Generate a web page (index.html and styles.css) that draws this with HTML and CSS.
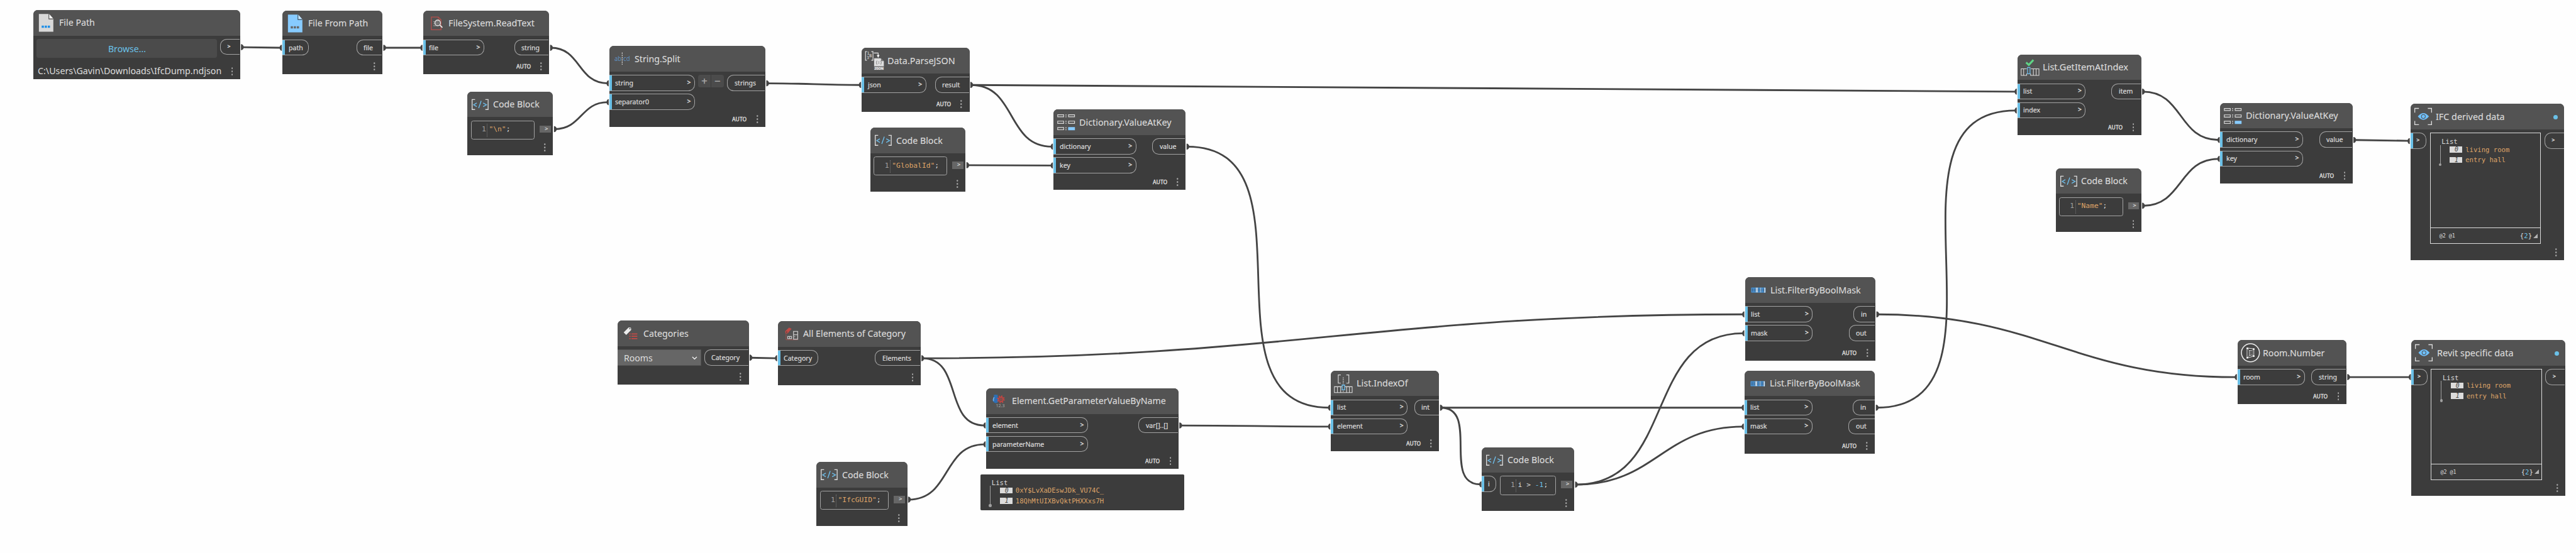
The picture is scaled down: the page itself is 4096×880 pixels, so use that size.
FILE: index.html
```html
<!DOCTYPE html>
<html lang="en">
<head>
<meta charset="utf-8">
<title>Graph</title>
<link rel="stylesheet" href="styles.css">
</head>
<body>
<svg class="defs" aria-hidden="true">
  <symbol id="i-code" viewBox="0 0 46 46"><path d="M14 14H8.700V32H14M32.500 14H37.500V32H32.500" fill="none" stroke="#dcdcdc" stroke-width="1.500"/><path d="M17 20.300L11.500 23.500L17 26.700M28.500 20.300L34.500 23.500L28.500 26.700M25 16.500L20.500 29.500" fill="none" stroke="#6fc0ee" stroke-width="1.500"/></symbol>
  <symbol id="i-dict" viewBox="0 0 46 46"><path d="M7.700 9.700H18.500V13.500H7.700zM27.200 9.700H38V13.500H27.200zM7.700 21.200H18.500V25.300H7.700zM27.200 21.200H38V25.300H27.200zM7.700 32.700H18.500V36.800H7.700z" fill="none" stroke="#dcdcdc" stroke-width="1.300"/><path d="M26.500 32H38.700V37.500H26.500z" fill="#87cbff"/><path d="M22.600 9V14.500M22.600 20.500V26M22.600 32V37.500" stroke="#dcdcdc" stroke-width="1.400" stroke-dasharray="2.200 1.300"/></symbol>
  <symbol id="i-filter" viewBox="0 0 46 46"><path d="M11 19h25.500v8.500H11z" fill="#3f6f9d"/><path d="M11.500 19.500h24.500v7.500h-24.500zM15.500 19v8.500M25 19v8.500M31 19v8.500" fill="none" stroke="#4a9ae0" stroke-width="1.200"/><path d="M19.500 19v8.500M28 19v8.500" stroke="#b9d9f2" stroke-width="1.200"/><path d="M35.300 19v9M21.500 19v8.500" stroke="#f2f6fa" stroke-width="1.600"/></symbol>
  <symbol id="i-eye" viewBox="0 0 46 46"><path d="M7.500 16V8.500H15M31 8.500H37.700V16M7.500 31V37.700H15M31 37.700H37.700V31" fill="none" stroke="#dcdcdc" stroke-width="1.500"/><path d="M13 23Q23 11 33 23Q23 35 13 23z" fill="#6fc0fc"/><circle cx="23" cy="23" r="3.500" fill="none" stroke="#535353" stroke-width="1.200"/></symbol>
  <symbol id="i-dots" viewBox="0 0 3 15"><circle cx="1.500" cy="1.800" r="1.500" fill="#a6a6a6"/><circle cx="1.500" cy="7.500" r="1.500" fill="#a6a6a6"/><circle cx="1.500" cy="13.200" r="1.500" fill="#a6a6a6"/></symbol>
</svg>
<main class="canvas">
<svg class="wires" viewBox="0 0 4634 995">
  <g fill="none" stroke="#444" stroke-width="3.200">
    <path d="M434 85L505 86"/>
    <path d="M690 86H758"/>
    <path d="M991 86C1045 86 1039 150 1093 150"/>
    <path d="M998 232.500C1046 232.500 1045 184 1093 184"/>
    <path d="M1380 150C1455 150 1472 153 1547 153"/>
    <path d="M1747 153C2593 153 2780 165 3626 165"/>
    <path d="M1747 153C1829 153 1810 264 1892 264"/>
    <path d="M1740 297.500L1892 298"/>
    <path d="M2136 264C2377 264 2150 734 2391 734"/>
    <path d="M1350 644L1396 645"/>
    <path d="M1659 645C2325 645 2470 566 3136 566"/>
    <path d="M1659 645C1733 645 1697 766 1771 766"/>
    <path d="M1635 899.500C1711 899.500 1695 800 1771 800"/>
    <path d="M2123 766C2244 766 2270 768 2391 768"/>
    <path d="M2592 734H3135"/>
    <path d="M2592 734C2662 734 2593 872 2663 872"/>
    <path d="M2835 872.500C3018 872.500 2953 600 3136 600"/>
    <path d="M2835 872.500C2978 872.500 2992 768 3135 768"/>
    <path d="M3377 566C3672 566 3727 679 4022 679"/>
    <path d="M3376 734C3642 734 3360 199 3626 199"/>
    <path d="M3855 165C3928 165 3918 252 3991 252"/>
    <path d="M3855 370.500C3927 370.500 3919 286 3991 286"/>
    <path d="M4235 252L4333 253.500"/>
    <path d="M4224 679H4335"/>
  </g>
  <g fill="#444">
    <path d="M433.500 79.500a5 5.500 0 0 1 0 11zM689.500 80.500a5 5.500 0 0 1 0 11zM989.500 80.500a5 5.500 0 0 1 0 11zM996.500 227a5 5.500 0 0 1 0 11zM1378.500 144.500a5 5.500 0 0 1 0 11zM1745.500 147.500a5 5.500 0 0 1 0 11zM1738.500 292a5 5.500 0 0 1 0 11zM2134.500 258.500a5 5.500 0 0 1 0 11zM1348.500 638.500a5 5.500 0 0 1 0 11zM1657.500 639.500a5 5.500 0 0 1 0 11zM1633.500 894a5 5.500 0 0 1 0 11zM2121.500 760.500a5 5.500 0 0 1 0 11zM2590.500 728.500a5 5.500 0 0 1 0 11zM2833.500 867a5 5.500 0 0 1 0 11zM3375.500 560.500a5 5.500 0 0 1 0 11zM3374.500 728.500a5 5.500 0 0 1 0 11zM3853.500 159.500a5 5.500 0 0 1 0 11zM3853.500 365a5 5.500 0 0 1 0 11zM4233.500 246.500a5 5.500 0 0 1 0 11zM4222.500 673.500a5 5.500 0 0 1 0 11z"/>
    <path d="M507 80.500a4 5.500 0 0 0 0 11zM760 80.500a4 5.500 0 0 0 0 11zM1095 144.500a4 5.500 0 0 0 0 11zM1095 178.500a4 5.500 0 0 0 0 11zM1549 147.500a4 5.500 0 0 0 0 11zM1894 258.500a4 5.500 0 0 0 0 11zM1894 292.500a4 5.500 0 0 0 0 11zM1398 639.500a4 5.500 0 0 0 0 11zM1773 760.500a4 5.500 0 0 0 0 11zM1773 794.500a4 5.500 0 0 0 0 11zM2393 728.500a4 5.500 0 0 0 0 11zM2393 762.500a4 5.500 0 0 0 0 11zM2665 866.500a4 5.500 0 0 0 0 11zM3138 560.500a4 5.500 0 0 0 0 11zM3138 594.500a4 5.500 0 0 0 0 11zM3137 728.500a4 5.500 0 0 0 0 11zM3137 762.500a4 5.500 0 0 0 0 11zM3628 159.500a4 5.500 0 0 0 0 11zM3628 193.500a4 5.500 0 0 0 0 11zM3993 246.500a4 5.500 0 0 0 0 11zM3993 280.500a4 5.500 0 0 0 0 11zM4335 248.500a4 5.500 0 0 0 0 11zM4024 673.500a4 5.500 0 0 0 0 11zM4337 673.500a4 5.500 0 0 0 0 11z"/>
  </g>
</svg>

<article class="node file-path">
  <header><svg class="icon" viewBox="0 0 46 46"><path d="M10 7H28L36 16V39H10z" fill="#d8d8d8"/><path d="M28.500 7V15.500H36z" fill="#f6f6f6"/><path d="M28 7V16H36" fill="none" stroke="#4a4a4a" stroke-width="1.200"/><path d="M15 28h4v4h-4zM20.500 28h4v4h-4zM26 28h4v4h-4z" fill="#1e8fe8"/></svg><h2>File Path</h2></header>
  <div class="ports"><button class="browse"><span>Browse...</span></button><div class="outs"><div class="out bare"><b>&gt;</b></div></div></div>
  <footer><span class="path">C:\Users\Gavin\Downloads\IfcDump.ndjson</span><svg class="dots"><use href="#i-dots"/></svg></footer>
</article>

<article class="node file-from">
  <header><svg class="icon" viewBox="0 0 46 46"><path d="M10 7H28L36 16V39H10z" fill="#87cbff"/><path d="M28.500 7V15.500H36z" fill="#c4e4ff"/><path d="M28 7V16H36" fill="none" stroke="#3d4d5a" stroke-width="1.200"/><path d="M15 28h4v4h-4zM20.500 28h4v4h-4zM26 28h4v4h-4z" fill="#666"/></svg><h2>File From Path</h2></header>
  <div class="ports"><div class="ins"><div class="in"><span>path</span></div></div><div class="outs"><div class="out"><span>file</span></div></div></div>
  <footer><svg class="dots"><use href="#i-dots"/></svg></footer>
</article>

<article class="node read-text">
  <header><svg class="icon" viewBox="0 0 46 46"><path d="M14.500 11.500H27L32 16.500V34.500H14.500z" fill="none" stroke="#b5504c" stroke-width="1.400"/><path d="M27 11.500V16.500H32" fill="none" stroke="#b5504c"/><path d="M18 20H28M18 23.500H28M18 27H28" stroke="#999" stroke-width="1.300"/><circle cx="26" cy="22" r="5" fill="#777" fill-opacity=".7" stroke="#e8e8e8" stroke-width="1.500"/><path d="M29.500 25.500L34.500 30.500" stroke="#e8e8e8" stroke-width="2"/></svg><h2>FileSystem.ReadText</h2></header>
  <div class="ports"><div class="ins"><div class="in"><span>file</span><b>&gt;</b></div></div><div class="outs"><div class="out"><span>string</span></div></div></div>
  <footer><span class="auto">AUTO</span><svg class="dots"><use href="#i-dots"/></svg></footer>
</article>

<article class="node code newline">
  <header><svg class="icon"><use href="#i-code"/></svg><h2>Code Block</h2></header>
  <div class="ports"><div class="editor"><i>1</i><code><em>"\n"</em>;</code></div><div class="chip">&gt;</div></div>
  <footer><svg class="dots"><use href="#i-dots"/></svg></footer>
</article>

<article class="node split">
  <header><svg class="icon" viewBox="0 0 46 46"><path d="M23 12V34" stroke="#dcdcdc" stroke-width="1.300" stroke-dasharray="2.500 1.500"/><text class="ab" x="9" y="27.300" textLength="12.500" lengthAdjust="spacingAndGlyphs">ab</text><text class="ab" x="25" y="27.300" textLength="12" lengthAdjust="spacingAndGlyphs">cd</text></svg><h2>String.Split</h2></header>
  <div class="ports"><div class="ins"><div class="in"><span>string</span><b>&gt;</b></div><div class="in"><span>separator0</span><b>&gt;</b></div></div><div class="stepper"><span>+</span><span>−</span></div><div class="outs"><div class="out"><span>strings</span></div></div></div>
  <footer><span class="auto">AUTO</span><svg class="dots"><use href="#i-dots"/></svg></footer>
</article>

<article class="node parse">
  <header><svg class="icon" viewBox="0 0 46 46"><path d="M9.500 7H7V22.500H9.500M17.500 7H20.500V22.500H17.500M22 9.500H29.800V14" fill="none" stroke="#e4e4e4" stroke-width="1.300"/><path d="M27.300 13H32.300L29.800 18z" fill="#fff"/><g class="tiny"><text x="9.500" y="13">1</text><text x="9" y="20.500">3</text><text x="14" y="17">B</text></g><path d="M22.500 19H34L40 24V33.500H22.500z" fill="#dedede"/><path d="M35 19V24H40z" fill="#777"/><path d="M28 23.500Q26.500 23.500 27 26Q27 26.500 26 26.500Q27 27 27 28Q26.500 30 28 30M34 23.500Q35.500 23.500 35 26Q35 26.500 36 26.500Q35 27 35 28Q35.500 30 34 30" fill="none" stroke="#777"/><path d="M30 25.500h2M30 28h2" stroke="#777"/><path d="M22.500 33.500H40V40H22.500z" fill="#8a8a8a"/><text class="json" x="23" y="39.500" textLength="16.500" lengthAdjust="spacingAndGlyphs">JSON</text></svg><h2>Data.ParseJSON</h2></header>
  <div class="ports"><div class="ins"><div class="in"><span>json</span><b>&gt;</b></div></div><div class="outs"><div class="out"><span>result</span></div></div></div>
  <footer><span class="auto">AUTO</span><svg class="dots"><use href="#i-dots"/></svg></footer>
</article>

<article class="node code global-id">
  <header><svg class="icon"><use href="#i-code"/></svg><h2>Code Block</h2></header>
  <div class="ports"><div class="editor"><i>1</i><code><em>"GlobalId"</em>;</code></div><div class="chip">&gt;</div></div>
  <footer><svg class="dots"><use href="#i-dots"/></svg></footer>
</article>

<article class="node dict dict-a">
  <header><svg class="icon"><use href="#i-dict"/></svg><h2>Dictionary.ValueAtKey</h2></header>
  <div class="ports"><div class="ins"><div class="in"><span>dictionary</span><b>&gt;</b></div><div class="in"><span>key</span><b>&gt;</b></div></div><div class="outs"><div class="out"><span>value</span></div></div></div>
  <footer><span class="auto">AUTO</span><svg class="dots"><use href="#i-dots"/></svg></footer>
</article>

<article class="node categories">
  <header><svg class="icon" viewBox="0 0 46 46"><path d="M11 21.500L20 12.500L24 13L24.500 17L15.500 26z" fill="#ececec"/><circle cx="22" cy="14.800" r="1.100" fill="#535353"/><path d="M21 24.200h2.500M21 28.500h2.500M21 32.800h2.500M25 24.200h10.500M25 28.500h10.500M25 32.800h10.500" stroke="#c24a46" stroke-width="2"/></svg><h2>Categories</h2></header>
  <div class="ports"><div class="select"><span>Rooms</span><svg viewBox="0 0 10 6"><path d="M1 1L5 5L9 1" fill="none" stroke="#fff" stroke-width="1.500"/></svg></div><div class="outs"><div class="out"><span>Category</span></div></div></div>
  <footer><svg class="dots"><use href="#i-dots"/></svg></footer>
</article>

<article class="node all-elements">
  <header><svg class="icon" viewBox="0 0 46 46"><path d="M13 18L20 11.500L24.500 14L17.500 22L13.500 22z" fill="#c24a46"/><circle cx="15.700" cy="19.800" r="1" fill="#444"/><path d="M14.500 22V33.500H36" fill="none" stroke="#b5504c" stroke-width="1.300" stroke-dasharray="1.500 1"/><path d="M17.500 27.500h7v4h-7zM21 27.500v4" fill="none" stroke="#c8c8c8" stroke-width="1.400"/><path d="M28 18.500h7.500v14H28zM28 24.500h7.500" fill="none" stroke="#c0c0c0" stroke-width="1.600"/><path d="M29.500 28h1.500" stroke="#ddd"/></svg><h2>All Elements of Category</h2></header>
  <div class="ports"><div class="ins"><div class="in"><span>Category</span></div></div><div class="outs"><div class="out"><span>Elements</span></div></div></div>
  <footer><svg class="dots"><use href="#i-dots"/></svg></footer>
</article>

<article class="node get-param">
  <header><svg class="icon" viewBox="0 0 46 46"><path d="M13.500 12Q17 10.500 21 12Q20 14 21.500 16.500Q25 20 22 24Q18.500 28 14.500 25.500Q9.500 21 13.500 16Q15 14 13.500 12z" fill="#2d70b5"/><path d="M14.500 16Q12 20 13.500 23" fill="none" stroke="#79b0e6" stroke-width="1.500"/><circle cx="26.500" cy="19.700" r="6" fill="none" stroke="#c94440" stroke-width="2" stroke-dasharray="2.300 2.410"/><circle cx="26.500" cy="19.700" r="4" fill="#5c5252" stroke="#c94440" stroke-width="2"/><circle cx="26.500" cy="19.700" r="1.500" fill="none" stroke="#c94440"/><text class="num" x="17.500" y="34.500" textLength="16" lengthAdjust="spacingAndGlyphs">12.3</text></svg><h2>Element.GetParameterValueByName</h2></header>
  <div class="ports"><div class="ins"><div class="in"><span>element</span><b>&gt;</b></div><div class="in"><span>parameterName</span><b>&gt;</b></div></div><div class="outs"><div class="out"><span>var[]..[]</span></div></div></div>
  <footer><span class="auto">AUTO</span><svg class="dots"><use href="#i-dots"/></svg></footer>
</article>

<aside class="bubble"><div class="tree"><p>List</p><ol><li><i>0</i>0xY$LvXaDEswJDk_VU74C_</li><li><i>1</i>18QhMtUIXBvQktPHXXxs7H</li></ol></div></aside>

<article class="node code ifc-guid">
  <header><svg class="icon"><use href="#i-code"/></svg><h2>Code Block</h2></header>
  <div class="ports"><div class="editor"><i>1</i><code><em>"IfcGUID"</em>;</code></div><div class="chip">&gt;</div></div>
  <footer><svg class="dots"><use href="#i-dots"/></svg></footer>
</article>

<article class="node index-of">
  <header><svg class="icon" viewBox="0 0 46 46"><path d="M18 7.500H13.500V22.300H18M28 7.500H32.500V22.300H28" fill="none" stroke="#dcdcdc" stroke-width="1.300"/><path d="M22.500 12V24.500M22.500 36V39" stroke="#dcdcdc" stroke-width="1.200" stroke-dasharray="2 1"/><path d="M20 28.700H6.500V39.300H38.500V28.700H25.500M12 28.700V39.300M17.800 28.700V39.300M28.500 28.700V39.300M33.500 28.700V39.300" fill="none" stroke="#dcdcdc" stroke-width="1.200"/><path d="M20.500 25.700h4.500v8.600h-4.500z" fill="none" stroke="#6fc0ee" stroke-width="1.500"/></svg><h2>List.IndexOf</h2></header>
  <div class="ports"><div class="ins"><div class="in"><span>list</span><b>&gt;</b></div><div class="in"><span>element</span><b>&gt;</b></div></div><div class="outs"><div class="out"><span>int</span></div></div></div>
  <footer><span class="auto">AUTO</span><svg class="dots"><use href="#i-dots"/></svg></footer>
</article>

<article class="node code compare">
  <header><svg class="icon"><use href="#i-code"/></svg><h2>Code Block</h2></header>
  <div class="ports"><div class="ins"><div class="in"><span>i</span></div></div><div class="editor"><i>1</i><code>i &gt; <q>-1</q>;</code></div><div class="chip">&gt;</div></div>
  <footer><svg class="dots"><use href="#i-dots"/></svg></footer>
</article>

<article class="node filter filter-a">
  <header><svg class="icon"><use href="#i-filter"/></svg><h2>List.FilterByBoolMask</h2></header>
  <div class="ports"><div class="ins"><div class="in"><span>list</span><b>&gt;</b></div><div class="in"><span>mask</span><b>&gt;</b></div></div><div class="outs"><div class="out short"><span>in</span></div><div class="out"><span>out</span></div></div></div>
  <footer><span class="auto">AUTO</span><svg class="dots"><use href="#i-dots"/></svg></footer>
</article>

<article class="node filter filter-b">
  <header><svg class="icon"><use href="#i-filter"/></svg><h2>List.FilterByBoolMask</h2></header>
  <div class="ports"><div class="ins"><div class="in"><span>list</span><b>&gt;</b></div><div class="in"><span>mask</span><b>&gt;</b></div></div><div class="outs"><div class="out short"><span>in</span></div><div class="out"><span>out</span></div></div></div>
  <footer><span class="auto">AUTO</span><svg class="dots"><use href="#i-dots"/></svg></footer>
</article>

<article class="node get-item">
  <header><svg class="icon" viewBox="0 0 46 46"><path d="M15.500 14L20.300 18.500L28.500 9.500" fill="none" stroke="#5fd486" stroke-width="3.500"/><path d="M16.500 25.500H6.500V37.300H16.500V34M24 25.500H38.500V37.300H23.500V34M11 25.500V37.300M28.500 25.500V37.300M33.500 25.500V37.300" fill="none" stroke="#dcdcdc" stroke-width="1.200"/><path d="M18 23h4.500v11.500H18z" fill="none" stroke="#6fc0ee" stroke-width="1.400"/></svg><h2>List.GetItemAtIndex</h2></header>
  <div class="ports"><div class="ins"><div class="in"><span>list</span><b>&gt;</b></div><div class="in"><span>index</span><b>&gt;</b></div></div><div class="outs"><div class="out"><span>item</span></div></div></div>
  <footer><span class="auto">AUTO</span><svg class="dots"><use href="#i-dots"/></svg></footer>
</article>

<article class="node code name">
  <header><svg class="icon"><use href="#i-code"/></svg><h2>Code Block</h2></header>
  <div class="ports"><div class="editor"><i>1</i><code><em>"Name"</em>;</code></div><div class="chip">&gt;</div></div>
  <footer><svg class="dots"><use href="#i-dots"/></svg></footer>
</article>

<article class="node dict dict-b">
  <header><svg class="icon"><use href="#i-dict"/></svg><h2>Dictionary.ValueAtKey</h2></header>
  <div class="ports"><div class="ins"><div class="in"><span>dictionary</span><b>&gt;</b></div><div class="in"><span>key</span><b>&gt;</b></div></div><div class="outs"><div class="out"><span>value</span></div></div></div>
  <footer><span class="auto">AUTO</span><svg class="dots"><use href="#i-dots"/></svg></footer>
</article>

<article class="node watch ifc-data">
  <header><svg class="icon"><use href="#i-eye"/></svg><h2>IFC derived data</h2><span class="status"></span></header>
  <div class="ports"><div class="ins"><div class="in bare"><b>&gt;</b></div></div>
    <div class="viewer"><div class="tree"><p>List</p><ol><li><i>0</i>living room</li><li><i>1</i>entry hall</li></ol></div><div class="levels"><span>@2 @1</span><span class="count">{<q>2</q>}</span><svg viewBox="0 0 8 8"><path d="M8 0V8H0z" fill="#b4b4b4"/></svg></div></div>
    <div class="outs"><div class="out bare"><b>&gt;</b></div></div></div>
  <footer><svg class="dots"><use href="#i-dots"/></svg></footer>
</article>

<article class="node room">
  <header><svg class="icon" viewBox="0 0 46 46"><circle cx="23" cy="23" r="16.200" fill="#474747" stroke="#f0f0f0" stroke-width="1.700"/><path d="M17 14.500L29 16V29L17 32.500z" fill="#2f2f2f" stroke="#d8d8d8" stroke-width="1.300"/><path d="M20.500 18.500L26 19V27L20.500 28.500zM17 14.500L20.500 18.500M29 16L26 19M29 29L26 27M17 32.500L20.500 28.500M22.500 19V28" fill="none" stroke="#d8d8d8"/><g fill="#fff"><circle cx="17.500" cy="15" r="1.500"/><circle cx="29" cy="16.500" r="1.500"/><circle cx="29" cy="29" r="1.500"/><circle cx="17.500" cy="32" r="1.500"/></g></svg><h2>Room.Number</h2></header>
  <div class="ports"><div class="ins"><div class="in"><span>room</span><b>&gt;</b></div></div><div class="outs"><div class="out"><span>string</span></div></div></div>
  <footer><span class="auto">AUTO</span><svg class="dots"><use href="#i-dots"/></svg></footer>
</article>

<article class="node watch revit-data">
  <header><svg class="icon"><use href="#i-eye"/></svg><h2>Revit specific data</h2><span class="status"></span></header>
  <div class="ports"><div class="ins"><div class="in bare"><b>&gt;</b></div></div>
    <div class="viewer"><div class="tree"><p>List</p><ol><li><i>0</i>living room</li><li><i>1</i>entry hall</li></ol></div><div class="levels"><span>@2 @1</span><span class="count">{<q>2</q>}</span><svg viewBox="0 0 8 8"><path d="M8 0V8H0z" fill="#b4b4b4"/></svg></div></div>
    <div class="outs"><div class="out bare"><b>&gt;</b></div></div></div>
  <footer><svg class="dots"><use href="#i-dots"/></svg></footer>
</article>
</main>
</body>
</html>
```
FILE: styles.css
```css
* { box-sizing: border-box; }
html, body { margin: 0; height: 880px; overflow: hidden; background: #fefefe; }
.defs { position: absolute; width: 0; height: 0; }
.canvas {
  position: relative; width: 4634px; height: 995px; zoom: .8839;
  font-family: "Noto Sans", "Open Sans", sans-serif; color: #dcdcdc;
}
.wires { position: absolute; inset: 0; width: 4634px; height: 995px; }

/* Nodes sit freely on the canvas */
.node {
  position: absolute; display: flex; flex-direction: column;
  height: 115px; background: #3c3c3c; border-radius: 8px 8px 0 0; overflow: hidden;
}
.node header { display: flex; align-items: center; height: 46px; flex: none; background: #535353; }
.icon { width: 46px; height: 46px; flex: none; }
.node h2 {
  margin: 0; font-size: 17px; font-weight: 400; line-height: 47px; white-space: nowrap;
  transform: scaleX(var(--sx, .945)); transform-origin: 0 50%; flex: 1;
  -webkit-text-stroke: .15px;
}
.ports { display: flex; padding-top: 6px; align-items: flex-start; }
.ins, .outs { display: flex; flex-direction: column; gap: 5px; flex: none; }
.ins { width: var(--in); }
.outs { width: var(--out); margin-left: auto; align-items: flex-end; padding-right: 1px; }
.in, .out { display: flex; align-items: center; height: 29px; width: 100%; border: 1px solid #a3a3a3; font-size: 13px; line-height: 27px; -webkit-text-stroke: .25px; }
.in { justify-content: space-between; border-left: 0; border-radius: 0 12px 12px 0; padding: 0 6px 0 11px; background: linear-gradient(#6ac0e7, #6ac0e7) 0 0 / 5px 100% no-repeat; }
.out { border-right: 0; border-radius: 12px 0 0 12px; padding-left: 12px; }
.out.short { width: 39px; }
.in span, .out span { display: block; transform: scaleX(.92); transform-origin: 0 50%; white-space: nowrap; }
.in b, .out b { font-size: 12px; font-weight: 600; }
.bare b { font-size: 10px; font-weight: 600; }
.node footer { display: flex; align-items: center; justify-content: flex-end; margin-top: auto; height: 15px; margin-bottom: 6.5px; padding-right: 13px; flex: none; }
.dots { width: 3px; height: 15px; flex: none; }
.auto { font-size: 10.5px; font-weight: 500; line-height: 15px; margin-right: 17.5px; transform: scaleX(.92); transform-origin: 100% 50%; -webkit-text-stroke: .35px; }

/* Code blocks */
.editor { display: flex; height: 34px; margin-left: 6px; border: 1px solid #a3a3a3; border-radius: 4px; padding: 5px 0 4px 18.5px; width: var(--ed); font: 12.8px/17px "DejaVu Sans Mono", monospace; }
.editor i { font-style: normal; color: #a0a0a0; width: 10.5px; border-right: 1px dotted #777; height: 23px; padding-top: 1px; }
.editor code { font: inherit; padding: 1px 0 0 2.5px; white-space: pre; }
.editor em { font-style: normal; color: #dfa468; }
q { quotes: none; color: #6ac0e7; }
.chip { width: 20px; height: 13px; margin: 9px 4px 0 auto; background: #666; font-size: 11px; font-weight: 600; line-height: 12px; text-align: right; padding-right: 5px; }

/* Input widgets */
.browse { width: 324px; height: 34px; margin-left: 6px; border: 0; border-radius: 4px; background: #4b4b4b; color: #6ac0e7; font: 17px/34px "Noto Sans", sans-serif; padding: 0; }
.browse span { display: inline-block; transform: scaleX(.94); }
.path { font-size: 17px; line-height: 20px; margin: 0 auto 0 8px; white-space: nowrap; transform: scaleX(.95); transform-origin: 0 50%; }
.select { display: flex; align-items: center; justify-content: space-between; width: 150px; height: 29px; background: #666; border: 1px solid #555; border-left: 0; padding: 2px 5px 0 11px; font-size: 17px; line-height: 26px; }
.select svg { width: 10px; height: 6px; }
.select span { transform: scaleX(.94); transform-origin: 0 50%; }
.stepper { display: flex; gap: 1px; margin-left: 6px; }
.stepper span { width: 22.5px; height: 22px; background: #4b4b4b; color: #a8a8a8; font-size: 19px; line-height: 22px; text-align: center; -webkit-text-stroke: .3px; }
.stepper span:first-child { border-radius: 4px 0 0 4px; }
.stepper span:last-child { border-radius: 0 4px 4px 0; }

/* Value trees */
.tree { position: relative; padding: 8px 0 0 20px; font: 12px/14px "DejaVu Sans Mono", monospace; }
.tree::before { content: ""; position: absolute; left: 17px; top: 21px; width: 1px; height: 35px; background: #a0a0a0; }
.tree::after { content: ""; position: absolute; left: 15px; top: 53.5px; width: 5px; height: 5px; border-radius: 50%; background: #a0a0a0; }
.tree p { margin: 0; }
.tree ol { margin: 0; padding: 0 0 0 15px; list-style: none; color: #dfa468; }
.tree li { display: flex; align-items: center; height: 14px; margin: 0 0 5px; white-space: nowrap; }
.tree li i { width: 22px; height: 11px; margin-right: 6px; background: #dcdcdc; color: #444; line-height: 11px; font-size: 11px; text-align: center; padding-left: 2px; }
.bubble { position: absolute; left: 1764px; top: 854px; width: 366px; height: 65px; background: #3c3c3c; border-radius: 2px; }

/* Watch nodes */
.status { width: 8px; height: 8px; border-radius: 50%; background: #6ac0e7; margin: 2px 12px 0 0; }
.viewer { display: flex; flex-direction: column; width: 200px; height: 200px; margin-left: 6px; border: 1px solid #dcdcdc; }
.levels { display: flex; align-items: center; height: 28px; margin-top: auto; border-top: 1px solid #dcdcdc; padding: 0 5px 0 16px; font-size: 9.5px; font-family: "DejaVu Sans Mono", monospace; }
.levels .count { margin-left: auto; font-size: 12px; }
.levels svg { width: 8px; height: 8px; margin-left: 2px; }

/* Tiny lettering inside icons */
.ab { font: 12.5px "Noto Sans", sans-serif; fill: #5f8fbe; }
.tiny { font: 7.5px "DejaVu Sans Mono", monospace; fill: #e4e4e4; }
.json { font: bold 6.5px "Liberation Sans", sans-serif; fill: #fff; }
.num { font: 9px "Noto Sans", sans-serif; fill: #a8a8a8; }

/* Placement and port sizes */
.file-path { left: 60px; top: 18px; width: 372px; height: 124px; --out: 36px; }
.file-from { left: 508px; top: 19px; width: 180px; --in: 48px; --out: 47px; }
.read-text { left: 761px; top: 19px; width: 227px; --in: 110px; --out: 63px; --sx: .955; }
.newline { left: 841px; top: 165px; width: 154px; --ed: 115px; }
.split { left: 1096px; top: 83px; width: 281px; height: 145px; --in: 154px; --out: 69px; }
.parse { left: 1550px; top: 86px; width: 194px; --in: 116px; --out: 62px; --sx: .96; }
.global-id { left: 1566px; top: 230px; width: 171px; --ed: 132px; }
.dict { width: 238px; height: 145px; --in: 149px; --out: 60px; --sx: .955; }
.dict-a { left: 1895px; top: 197px; }
.dict-b { left: 3994px; top: 185px; }
.categories { left: 1111px; top: 577px; width: 236px; --out: 80px; }
.all-elements { left: 1399px; top: 578px; width: 257px; --in: 73px; --out: 82px; }
.get-param { left: 1774px; top: 699px; width: 346px; height: 145px; --in: 183px; --out: 72px; }
.ifc-guid { left: 1469px; top: 832px; width: 163px; --ed: 124px; }
.index-of { left: 2394px; top: 667px; width: 195px; height: 145px; --in: 138px; --out: 45px; --sx: .96; }
.compare { left: 2666px; top: 805px; width: 166px; --in: 26px; --ed: 101px; }
.filter { width: 235px; height: 150px; --in: 122px; --out: 48px; --sx: .955; }
.filter-a { left: 3139px; top: 499px; }
.filter-b { left: 3138px; top: 667px; }
.get-item { left: 3629px; top: 98px; width: 223px; height: 145px; --in: 123px; --out: 54px; --sx: .97; }
.name { left: 3698px; top: 303px; width: 154px; --ed: 115px; }
.watch { width: 277px; height: 281px; --in: 29px; --out: 36px; --sx: .955; }
.ifc-data { left: 4336px; top: 187px; }
.revit-data { left: 4338px; top: 612px; --sx: .965; }
.room { left: 4025px; top: 612px; width: 196px; --in: 121px; --out: 63px; }
```
